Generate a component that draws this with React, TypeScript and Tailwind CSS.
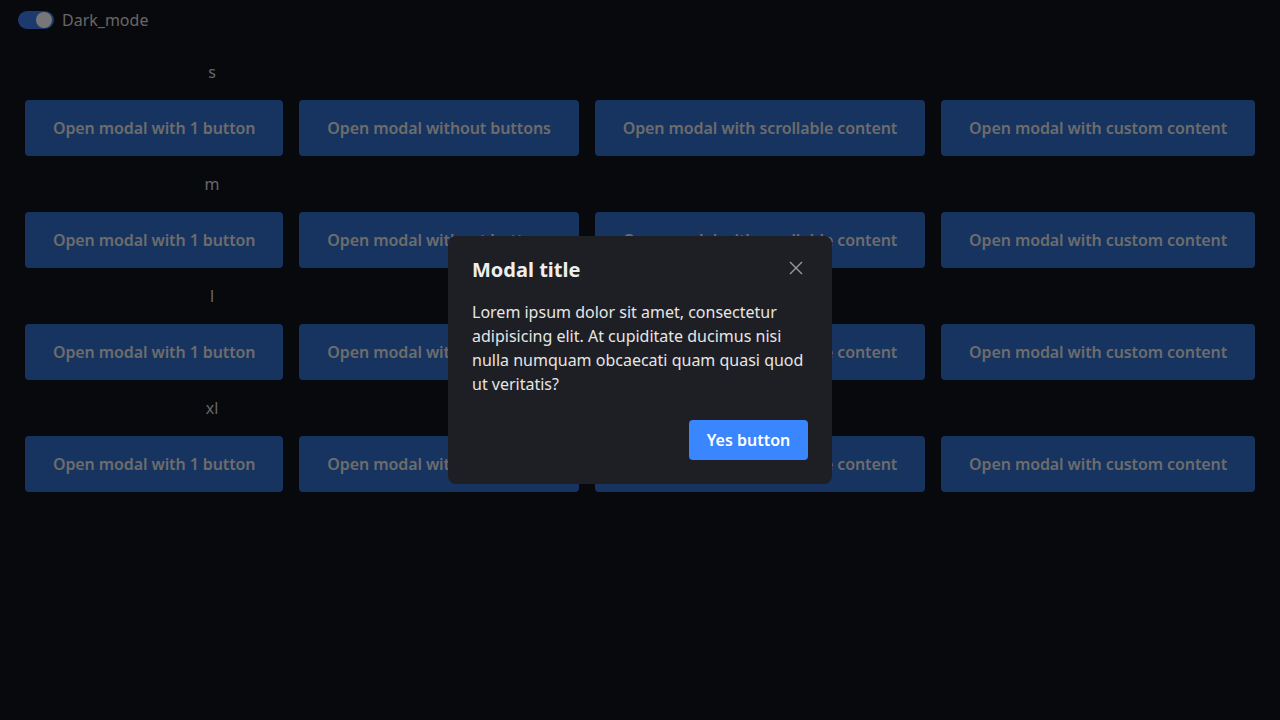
const sizes = ['s', 'm', 'l', 'xl']
const labels = [
	'Open modal with 1 button',
	'Open modal without buttons',
	'Open modal with scrollable content',
	'Open modal with custom content',
]

export default function App() {
	return (
		<div className="relative min-h-screen bg-[#101218] text-[#cfcfcf]" style={{ fontFamily: '"Noto Sans", sans-serif' }}>
			{/* top bar */}
			<div className="flex items-center gap-2 px-[18px] pt-[11px]">
				<div className="flex h-[18px] w-[36px] items-center justify-end rounded-full bg-[#3a74dc] px-[2px]">
					<div className="h-[16px] w-[16px] rounded-full bg-[#eeeeee]" />
				</div>
				<span className="text-base leading-[18px] text-[#cccccc]">Dark_mode</span>
			</div>

			<div className="px-[25px] pt-[31px]">
				{sizes.map((s) => (
					<div key={s} className="mb-4">
						<div className="w-[374px] text-center text-base leading-6 text-[#cccccc]">{s}</div>
						<div className="mt-4 flex gap-4">
							{labels.map((l) => (
								<button
									key={l}
									className="h-14 flex-auto rounded bg-[#2f66be] px-4 text-base font-semibold tracking-[-0.1px] text-[#d8d8d8]"
								>
									{l}
								</button>
							))}
						</div>
					</div>
				))}
			</div>

			{/* overlay */}
			<div className="fixed inset-0 flex items-center justify-center bg-black/50">
				<div className="w-[384px] rounded-lg bg-[#1e1f24] p-6">
					<div className="flex items-center justify-between">
						<h2 className="text-xl font-bold leading-5 text-[#eeeeee]">Modal title</h2>
						<svg width="14" height="14" viewBox="0 0 14 14" className="mr-[5px] -mt-[4px] text-[#9a9a9a]">
							<path d="M1 1L13 13M13 1L1 13" stroke="currentColor" strokeWidth="1.4" fill="none" />
						</svg>
					</div>
					<p className="mt-5 text-base leading-6 text-[#e6e6e6]">
						Lorem ipsum dolor sit amet, consectetur adipisicing elit. At cupiditate ducimus nisi nulla numquam obcaecati quam quasi quod ut veritatis?
					</p>
					<div className="mt-6 flex justify-end">
						<button className="h-10 w-[119px] rounded bg-[#3a86ff] text-base font-semibold text-white">Yes button</button>
					</div>
				</div>
			</div>
		</div>
	)
}
